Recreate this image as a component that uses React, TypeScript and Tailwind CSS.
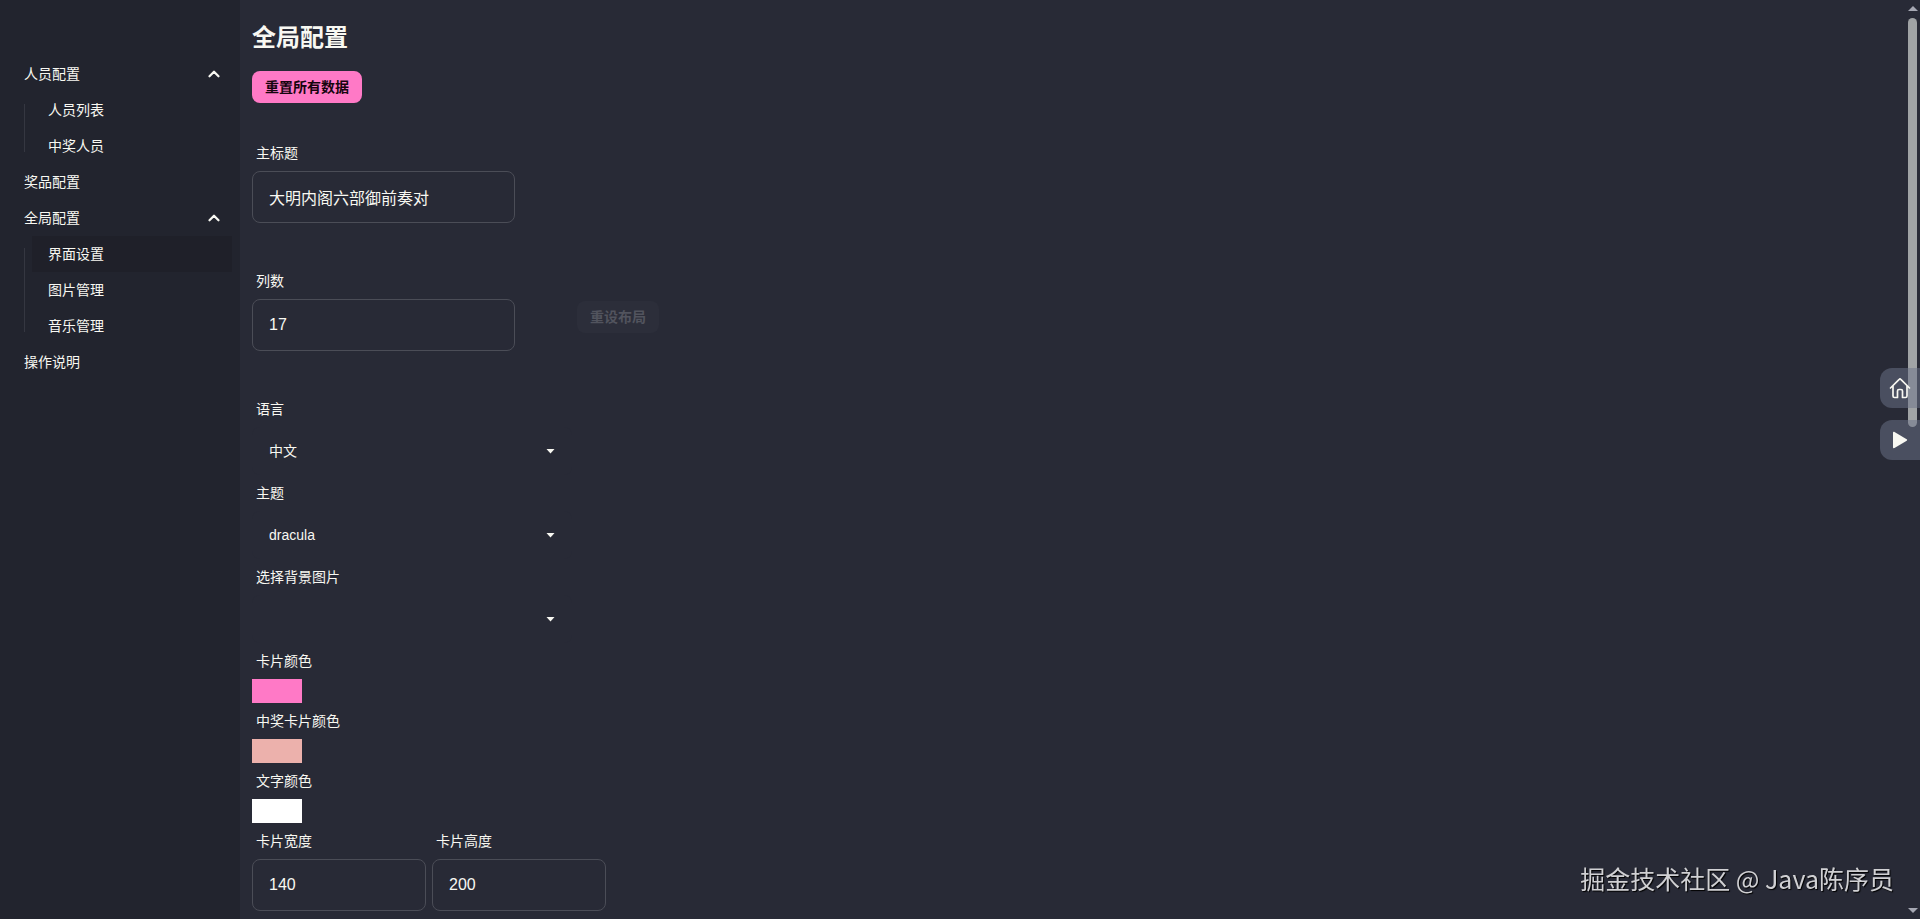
import React from 'react';
import { ChevronUp } from 'lucide-react';
import clsx from 'clsx';

type MenuEntry = {
  name: string;
  path: string;
  children?: { name: string; path: string }[];
};

const MENU: MenuEntry[] = [
  {
    name: '人员配置',
    path: '#/config/person',
    children: [
      { name: '人员列表', path: '#/config/person/all' },
      { name: '中奖人员', path: '#/config/person/already' },
    ],
  },
  { name: '奖品配置', path: '#/config/prize' },
  {
    name: '全局配置',
    path: '#/config/global',
    children: [
      { name: '界面设置', path: '#/config/global/face' },
      { name: '图片管理', path: '#/config/global/image' },
      { name: '音乐管理', path: '#/config/global/music' },
    ],
  },
  { name: '操作说明', path: '#/config/readme' },
];

const ACTIVE_PATH = '#/config/global/face';

const SideMenu: React.FC = () => (
  <nav className="w-60 shrink-0 bg-[#22242e] px-2 pt-14">
    <ul>
      {MENU.map(item => (
        <li key={item.path}>
          {item.children ? (
            <details open>
              <summary className="flex cursor-pointer list-none items-center justify-between py-2 pl-4 pr-[9px]">
                {item.name}
                <ChevronUp size={18} strokeWidth={3} />
              </summary>
              <div className="ml-4 flex">
                <div className="my-3 w-px bg-[#353741]" />
                <ul className="ml-[7px] flex-1">
                  {item.children.map(child => (
                    <li key={child.path}>
                      <a
                        href={child.path}
                        className={clsx(
                          'block px-4 py-2',
                          child.path === ACTIVE_PATH && 'bg-[#1f2029]'
                        )}
                      >
                        {child.name}
                      </a>
                    </li>
                  ))}
                </ul>
              </div>
            </details>
          ) : (
            <a href={item.path} className="block px-4 py-2">
              {item.name}
            </a>
          )}
        </li>
      ))}
    </ul>
  </nav>
);

const FieldLabel: React.FC<{ id: string; text: string }> = ({ id, text }) => (
  <label htmlFor={id} className="block px-1 py-2">
    {text}
  </label>
);

type TextFieldProps = { id: string; label: string; value: string; type?: string; className: string };

const TextField: React.FC<TextFieldProps> = ({ id, label, value, type = 'text', className }) => (
  <div className={className}>
    <FieldLabel id={id} text={label} />
    <input
      id={id}
      type={type}
      defaultValue={value}
      className="h-13 w-full rounded-lg border border-[#4b4d57] bg-transparent px-4 text-base outline-none"
    />
  </div>
);

const SelectField: React.FC<{ id: string; label: string; options: string[] }> = ({ id, label, options }) => (
  <div className="w-full max-w-80">
    <FieldLabel id={id} text={label} />
    <div className="grid items-center">
      <select
        id={id}
        className="col-start-1 row-start-1 h-12 w-full appearance-none rounded-lg border border-transparent bg-[#282a36] px-4 outline-none"
      >
        {options.map(option => (
          <option key={option}>{option}</option>
        ))}
      </select>
      <svg
        className="pointer-events-none col-start-1 row-start-1 mr-[17px] mt-px justify-self-end"
        width="9"
        height="5"
        viewBox="0 0 9 5"
        fill="currentColor"
      >
        <path d="M0.500 0h8L4.500 4.500z" />
      </svg>
    </div>
  </div>
);

const ColorField: React.FC<{ id: string; label: string; value: string }> = ({ id, label, value }) => (
  <div>
    <FieldLabel id={id} text={label} />
    <input
      id={id}
      type="color"
      defaultValue={value}
      className="block h-6 w-[50px] cursor-pointer appearance-none border-0 bg-transparent p-0 [&::-webkit-color-swatch]:border-0 [&::-webkit-color-swatch-wrapper]:p-0"
    />
  </div>
);

const ScrollRail: React.FC = () => (
  <div className="fixed inset-y-0 right-0 flex w-3 flex-col items-start py-1.5">
    <svg width="10" height="5" viewBox="0 0 10 5" fill="#a6a8b3">
      <path d="M5 0l5 5H0z" />
    </svg>
    <div className="mt-[7px] h-[409px] w-[9px] rounded-full bg-[#a0a3a5]" />
    <svg className="mt-auto" width="10" height="5" viewBox="0 0 10 5" fill="#a6a8b3">
      <path d="M0 0h10L5 5z" />
    </svg>
  </div>
);

const FloatingButtons: React.FC = () => (
  <div className="fixed right-0 top-[368px] flex flex-col gap-3">
    <button
      aria-label="首页"
      className="flex size-10 items-center justify-center rounded-l-xl bg-[#6b7489]/50"
    >
      <svg width="24" height="24" viewBox="0 0 24 24" fill="none" stroke="currentColor" strokeWidth="1.7" strokeLinecap="round" strokeLinejoin="round">
        <path d="M2.5 12l8.700-8.700a1.100 1.100 0 0 1 1.600 0L21.500 12M5 10v10q0 1.500 1.500 1.500h3V15q0-1.500 1.500-1.500h2q1.500 0 1.500 1.500v6.500h3q1.500 0 1.500-1.500V10" />
      </svg>
    </button>
    <button
      aria-label="播放"
      className="flex size-10 items-center justify-center rounded-l-xl bg-[#6b7489]/50"
    >
      <svg width="24" height="24" viewBox="0 0 24 24" fill="currentColor">
        <path d="M5 4.700c0-.8.800-1.200 1.500-.8l12.200 7.400c.6.400.6 1 0 1.400L6.500 20.100c-.7.400-1.500 0-1.500-.8z" />
      </svg>
    </button>
  </div>
);

export default function App() {
  return (
    <div className="flex min-h-screen bg-[#282a36] font-['Liberation_Sans','Noto_Sans_CJK_SC',sans-serif] text-sm text-[#f8f8f2]">
      <SideMenu />

      <main className="flex-1 px-3 pb-2 pt-[22px]">
        <h2 className="text-2xl font-bold">全局配置</h2>
        <button className="mb-8 mt-[17px] block h-8 rounded-lg bg-[#ff79c6] px-[13px] font-semibold text-[#16050e]">
          重置所有数据
        </button>

        <TextField id="top-title" label="主标题" value="大明内阁六部御前奏对" className="mb-10 w-[263px]" />

        <div className="mb-10 flex items-end gap-[62px]">
          <TextField id="row-count" label="列数" value="17" type="number" className="w-[263px]" />
          <button disabled className="mb-[18px] h-8 rounded-lg bg-[#2c2e3a] px-[13px] font-semibold text-[#52545e]">
            重设布局
          </button>
        </div>

        <SelectField id="language" label="语言" options={['中文', 'English']} />
        <SelectField id="theme" label="主题" options={['dracula', 'light', 'dark']} />
        <SelectField id="background" label="选择背景图片" options={['']} />

        <ColorField id="card-color" label="卡片颜色" value="#ff79c6" />
        <ColorField id="lucky-color" label="中奖卡片颜色" value="#ecb1ac" />
        <ColorField id="text-color" label="文字颜色" value="#ffffff" />

        <div className="flex gap-1.5">
          <TextField id="card-width" label="卡片宽度" value="140" type="number" className="w-[174px]" />
          <TextField id="card-height" label="卡片高度" value="200" type="number" className="w-[174px]" />
        </div>
      </main>

      <ScrollRail />
      <FloatingButtons />

      {/* Watermark */}
      <div className="pointer-events-none fixed bottom-[21px] right-[26px] font-['Noto_Sans_CJK_SC',sans-serif] text-[25px] leading-10 text-[#d0d0d3] [text-shadow:1px_1px_1px_#000000]">
        掘金技术社区 @ Java陈序员
      </div>
    </div>
  );
}
